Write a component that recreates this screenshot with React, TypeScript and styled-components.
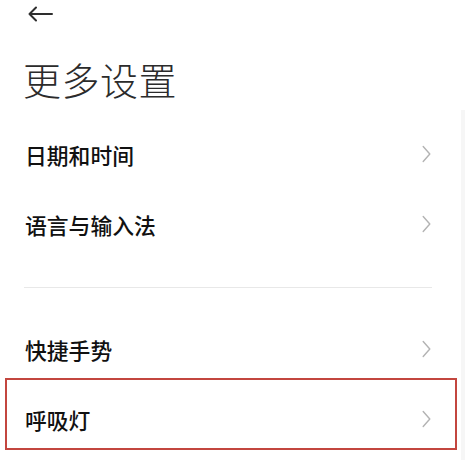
import React from 'react'
import styled, { createGlobalStyle } from 'styled-components'

const GlobalStyle = createGlobalStyle`
  html, body {
    margin: 0;
    padding: 0;
    background: #ffffff;
  }
  body {
    font-family: "Noto Sans CJK SC", "Noto Sans", sans-serif;
  }
`

const Page = styled.div`
  position: relative;
  width: 465px;
  height: 460px;
  overflow: hidden;
  background: #ffffff;
`

const Header = styled.div`
  height: 28px;
  display: flex;
  align-items: center;
  padding-left: 27px;
`

const BackButton = styled.button`
  border: none;
  background: none;
  padding: 0;
  width: 26px;
  height: 16px;
  display: flex;
  align-items: center;
  cursor: pointer;
`

const Title = styled.h1`
  margin: 32px 0 21px;
  padding-left: 23px;
  font-size: 38px;
  line-height: 38px;
  font-weight: 300;
  color: #2b2b2b;
  letter-spacing: 0.5px;
`

const Group = styled.div`
  display: flex;
  flex-direction: column;
`

const Row = styled.div<{ $highlighted?: boolean }>`
  position: relative;
  height: 70px;
  display: flex;
  align-items: center;
  justify-content: space-between;
  padding: 0 34px 0 25px;

  &::after {
    content: '';
    display: ${(p) => (p.$highlighted ? 'block' : 'none')};
    position: absolute;
    left: 5px;
    right: 8px;
    top: -6px;
    bottom: 4px;
    border: 2px solid #c3463f;
    pointer-events: none;
  }
`

const Label = styled.span`
  font-size: 21.8px;
  font-weight: 500;
  color: #111111;
`

const Divider = styled.div`
  height: 1px;
  margin: 28px 33px 26px 24px;
  background: #e8e8e8;
`

const ScrollTrack = styled.div`
  position: absolute;
  right: 0;
  top: 110px;
  bottom: 0;
  width: 4px;
  background: #f6f6f6;
`

const ArrowLeft = () => (
  <svg width="26" height="16" viewBox="0 0 26 16" fill="none">
    <path d="M25 8H2.5M9 1.5L2.5 8L9 14.5" stroke="#2e2e2e" strokeWidth="2" strokeLinecap="round" strokeLinejoin="round" />
  </svg>
)

const Chevron = () => (
  <svg width="9" height="18" viewBox="0 0 9 18" fill="none">
    <path d="M1.2 1.5L7.8 9L1.2 16.5" stroke="#b3b3b3" strokeWidth="1.4" strokeLinecap="round" strokeLinejoin="round" />
  </svg>
)

const items: { label: string; highlighted?: boolean }[][] = [
  [{ label: '日期和时间' }, { label: '语言与输入法' }],
  [{ label: '快捷手势' }, { label: '呼吸灯', highlighted: true }],
]

const App: React.FC = () => {
  return (
    <>
      <GlobalStyle />
      <Page>
        <Header>
          <BackButton aria-label="返回">
            <ArrowLeft />
          </BackButton>
        </Header>
        <Title>更多设置</Title>
        {items.map((group, gi) => (
          <React.Fragment key={gi}>
            {gi > 0 && <Divider />}
            <Group>
              {group.map((item) => (
                <Row key={item.label} $highlighted={item.highlighted}>
                  <Label>{item.label}</Label>
                  <Chevron />
                </Row>
              ))}
            </Group>
          </React.Fragment>
        ))}
        <ScrollTrack />
      </Page>
    </>
  )
}

export default App
